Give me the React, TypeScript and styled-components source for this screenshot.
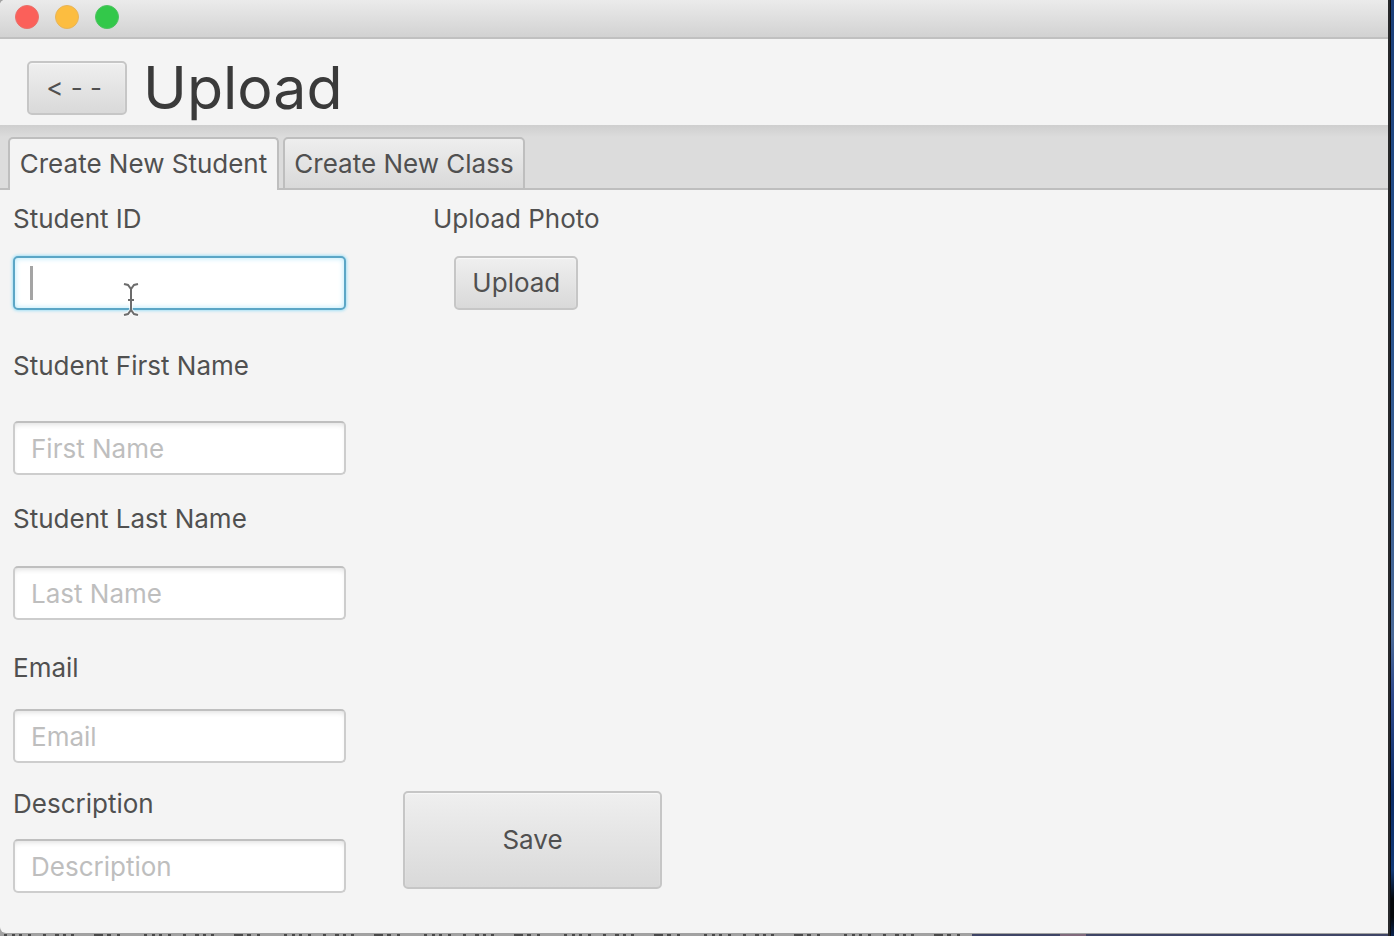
import React from 'react';
import styled, { createGlobalStyle } from 'styled-components';

const GlobalStyle = createGlobalStyle`
  * { box-sizing: border-box; }
  body {
    margin: 0;
    background: #28292b;
    font-family: Inter, "Liberation Sans", sans-serif;
    font-size: 26px;
    line-height: 30px;
    color: #505050;
  }
  button, input { font: inherit; color: inherit; }
`;

const Desktop = styled.div`
  display: flex;
  min-height: 100vh;
`;

const Stage = styled.div`
  display: flex;
  flex: 1;
  flex-direction: column;
  background: #a2a2a2;
`;

const Wallpaper = styled.div`
  width: 4px;
  margin-left: 2px;
  border-left: 1px solid #0a0c10;
  background: linear-gradient(#1c3f78, #24508c 30%, #4a6a98 68%, #2f4a8c 74%, #0b2c66 85%, #123a78 93%, #05080c 96%, #05080c 98%, #0a2450);
`;

const Window = styled.div`
  display: flex;
  flex: 1;
  flex-direction: column;
  overflow: hidden;
  border-radius: 5px 0 0 6px;
  background: #f4f4f4;
`;

const TitleBar = styled.div`
  display: flex;
  align-items: center;
  gap: 16px;
  height: 39px;
  padding: 0 15px 3px;
  border-bottom: 2px solid #c0c0c0;
  background: linear-gradient(#ebebeb, #d2d2d2);
`;

const WindowControl = styled.button<{ $color: string; $edge: string }>`
  width: 24px;
  height: 24px;
  padding: 0;
  border: 1px solid ${(p) => p.$edge};
  border-radius: 50%;
  background: ${(p) => p.$color};
`;

const Header = styled.header`
  display: flex;
  align-items: center;
  gap: 16px;
  height: 86px;
  padding: 12px 27px 0;
`;

const PushButton = styled.button<{ $width: number; $height?: number }>`
  width: ${(p) => p.$width}px;
  height: ${(p) => p.$height ?? 54}px;
  padding: 0;
  border: 2px solid #c6c6c6;
  border-radius: 5px;
  background: linear-gradient(#efefef, #d9d9d9);
  box-shadow: inset 0 1px 1px #f8f8f8;
`;

const BackButton = styled(PushButton)`
  padding-right: 6px;
`;

const Title = styled.h1`
  margin: 0;
  font-size: 59px;
  font-weight: 400;
  line-height: 70px;
  color: #3a3a3a;
`;

const TabBar = styled.div`
  display: flex;
  align-items: flex-end;
  gap: 4px;
  height: 65px;
  padding: 0 8px;
  background: linear-gradient(#cecece, #dcdcdc 12px);
  box-shadow: inset 0 -2px #bebebe;
`;

const Tab = styled.button<{ $width: number }>`
  width: ${(p) => p.$width}px;
  height: 53px;
  padding: 0;
  border: 2px solid #bebebe;
  border-radius: 5px 5px 0 0;
  background: linear-gradient(#eeeeee, #d9d9d9);
  white-space: nowrap;

  &[aria-selected='true'] {
    border-bottom: 0;
    padding-bottom: 2px;
    background: #f4f4f4;
  }
`;

const Form = styled.form`
  display: flex;
  gap: 57px;
  padding: 14px 13px 40px;
`;

const Fields = styled.div`
  display: flex;
  flex-direction: column;
  width: 333px;
`;

const Field = styled.div<{ $gap: number; $after: number }>`
  display: flex;
  flex-direction: column;
  gap: ${(p) => p.$gap}px;
  padding-bottom: ${(p) => p.$after}px;
`;

const Label = styled.label`
  white-space: nowrap;
`;

const InputWrap = styled.div`
  position: relative;
  display: flex;
`;

const TextInput = styled.input<{ $active?: boolean }>`
  width: 100%;
  height: 54px;
  padding: 0 16px;
  border: 2px solid ${(p) => (p.$active ? '#5ba6c6' : '#cdcdcd')};
  border-top-color: ${(p) => (p.$active ? '#5ba6c6' : '#bfbfbf')};
  border-radius: 5px;
  outline: none;
  background: #fff;
  box-shadow: ${(p) =>
    p.$active ? '0 0 3px 1px #a4e0f6, inset 0 0 5px 1px #c4edfb' : 'inset 0 4px 5px -2px #e4e4e4'};

  &::placeholder {
    color: #bebebe;
    opacity: 1;
  }
`;

const Caret = styled.span`
  position: absolute;
  top: 10px;
  left: 17px;
  width: 3px;
  height: 34px;
  background: #a4a4a4;
`;

const Pointer = styled.svg`
  position: absolute;
  top: 26px;
  left: 110px;
`;

const Actions = styled.div`
  display: flex;
  flex-direction: column;
  justify-content: space-between;
  padding-bottom: 4px;
`;

const Photo = styled.div`
  display: flex;
  flex-direction: column;
  align-items: center;
  align-self: flex-start;
  gap: 22px;
  padding-left: 30px;
`;

const Behind = styled.svg`
  display: block;
  width: 100%;
  height: 3px;
`;

const fields = [
  { id: 'first', label: 'Student First Name', hint: 'First Name', gap: 40, after: 29 },
  { id: 'last', label: 'Student Last Name', hint: 'Last Name', gap: 32, after: 33 },
  { id: 'email', label: 'Email', hint: 'Email', gap: 26, after: 26 },
  { id: 'description', label: 'Description', hint: 'Description', gap: 20, after: 0 },
];

const beam = 'M1 2L5 3L8 7L11 3L15 2M8 7V28M1 33L5 32L8 28L11 32L15 33M5 18H11';

export default function App() {
  return (
    <Desktop>
      <GlobalStyle />
      <Stage>
        <Window>
          <TitleBar>
            <WindowControl aria-label="Close" $color="#fb605a" $edge="#e8706a" />
            <WindowControl aria-label="Minimize" $color="#fcbd40" $edge="#e6b45a" />
            <WindowControl aria-label="Zoom" $color="#33c84a" $edge="#4fc262" />
          </TitleBar>
          <Header>
            <BackButton type="button" $width={100}>&lt; - -</BackButton>
            <Title>Upload</Title>
          </Header>
          <TabBar role="tablist">
            <Tab role="tab" aria-selected="true" $width={271}>Create New Student</Tab>
            <Tab role="tab" aria-selected="false" $width={242}>Create New Class</Tab>
          </TabBar>
          <Form>
            <Fields>
              <Field $gap={22} $after={41}>
                <Label htmlFor="student-id">Student ID</Label>
                <InputWrap>
                  <TextInput id="student-id" type="text" $active />
                  <Caret />
                  <Pointer width="16" height="35" viewBox="0 0 16 35" fill="none" aria-hidden="true">
                    <path d={beam} stroke="#fff" strokeOpacity="0.7" strokeWidth="4" />
                    <path d={beam} stroke="#6c6c6c" strokeWidth="2" />
                  </Pointer>
                </InputWrap>
              </Field>
              {fields.map((f) => (
                <Field key={f.id} $gap={f.gap} $after={f.after}>
                  <Label htmlFor={f.id}>{f.label}</Label>
                  <TextInput id={f.id} type="text" placeholder={f.hint} />
                </Field>
              ))}
            </Fields>
            <Actions>
              <Photo>
                <Label htmlFor="photo">Upload Photo</Label>
                <PushButton id="photo" type="button" $width={124}>Upload</PushButton>
              </Photo>
              <PushButton type="button" $width={259} $height={98}>Save</PushButton>
            </Actions>
          </Form>
        </Window>
        <Behind aria-hidden="true">
          <path
            d="M4 2H972"
            stroke="#4a4a4a"
            strokeWidth="2"
            strokeDasharray="3 5 3 4 3 6 3 12 3 9 4 4 3 5 3 20 9 4 4 6 3 24"
          />
          <rect x="972" y="1" width="100%" height="2" fill="#3f4566" />
          <rect x="1060" y="1" width="26" height="2" fill="#806a7c" />
        </Behind>
      </Stage>
      <Wallpaper />
    </Desktop>
  );
}
